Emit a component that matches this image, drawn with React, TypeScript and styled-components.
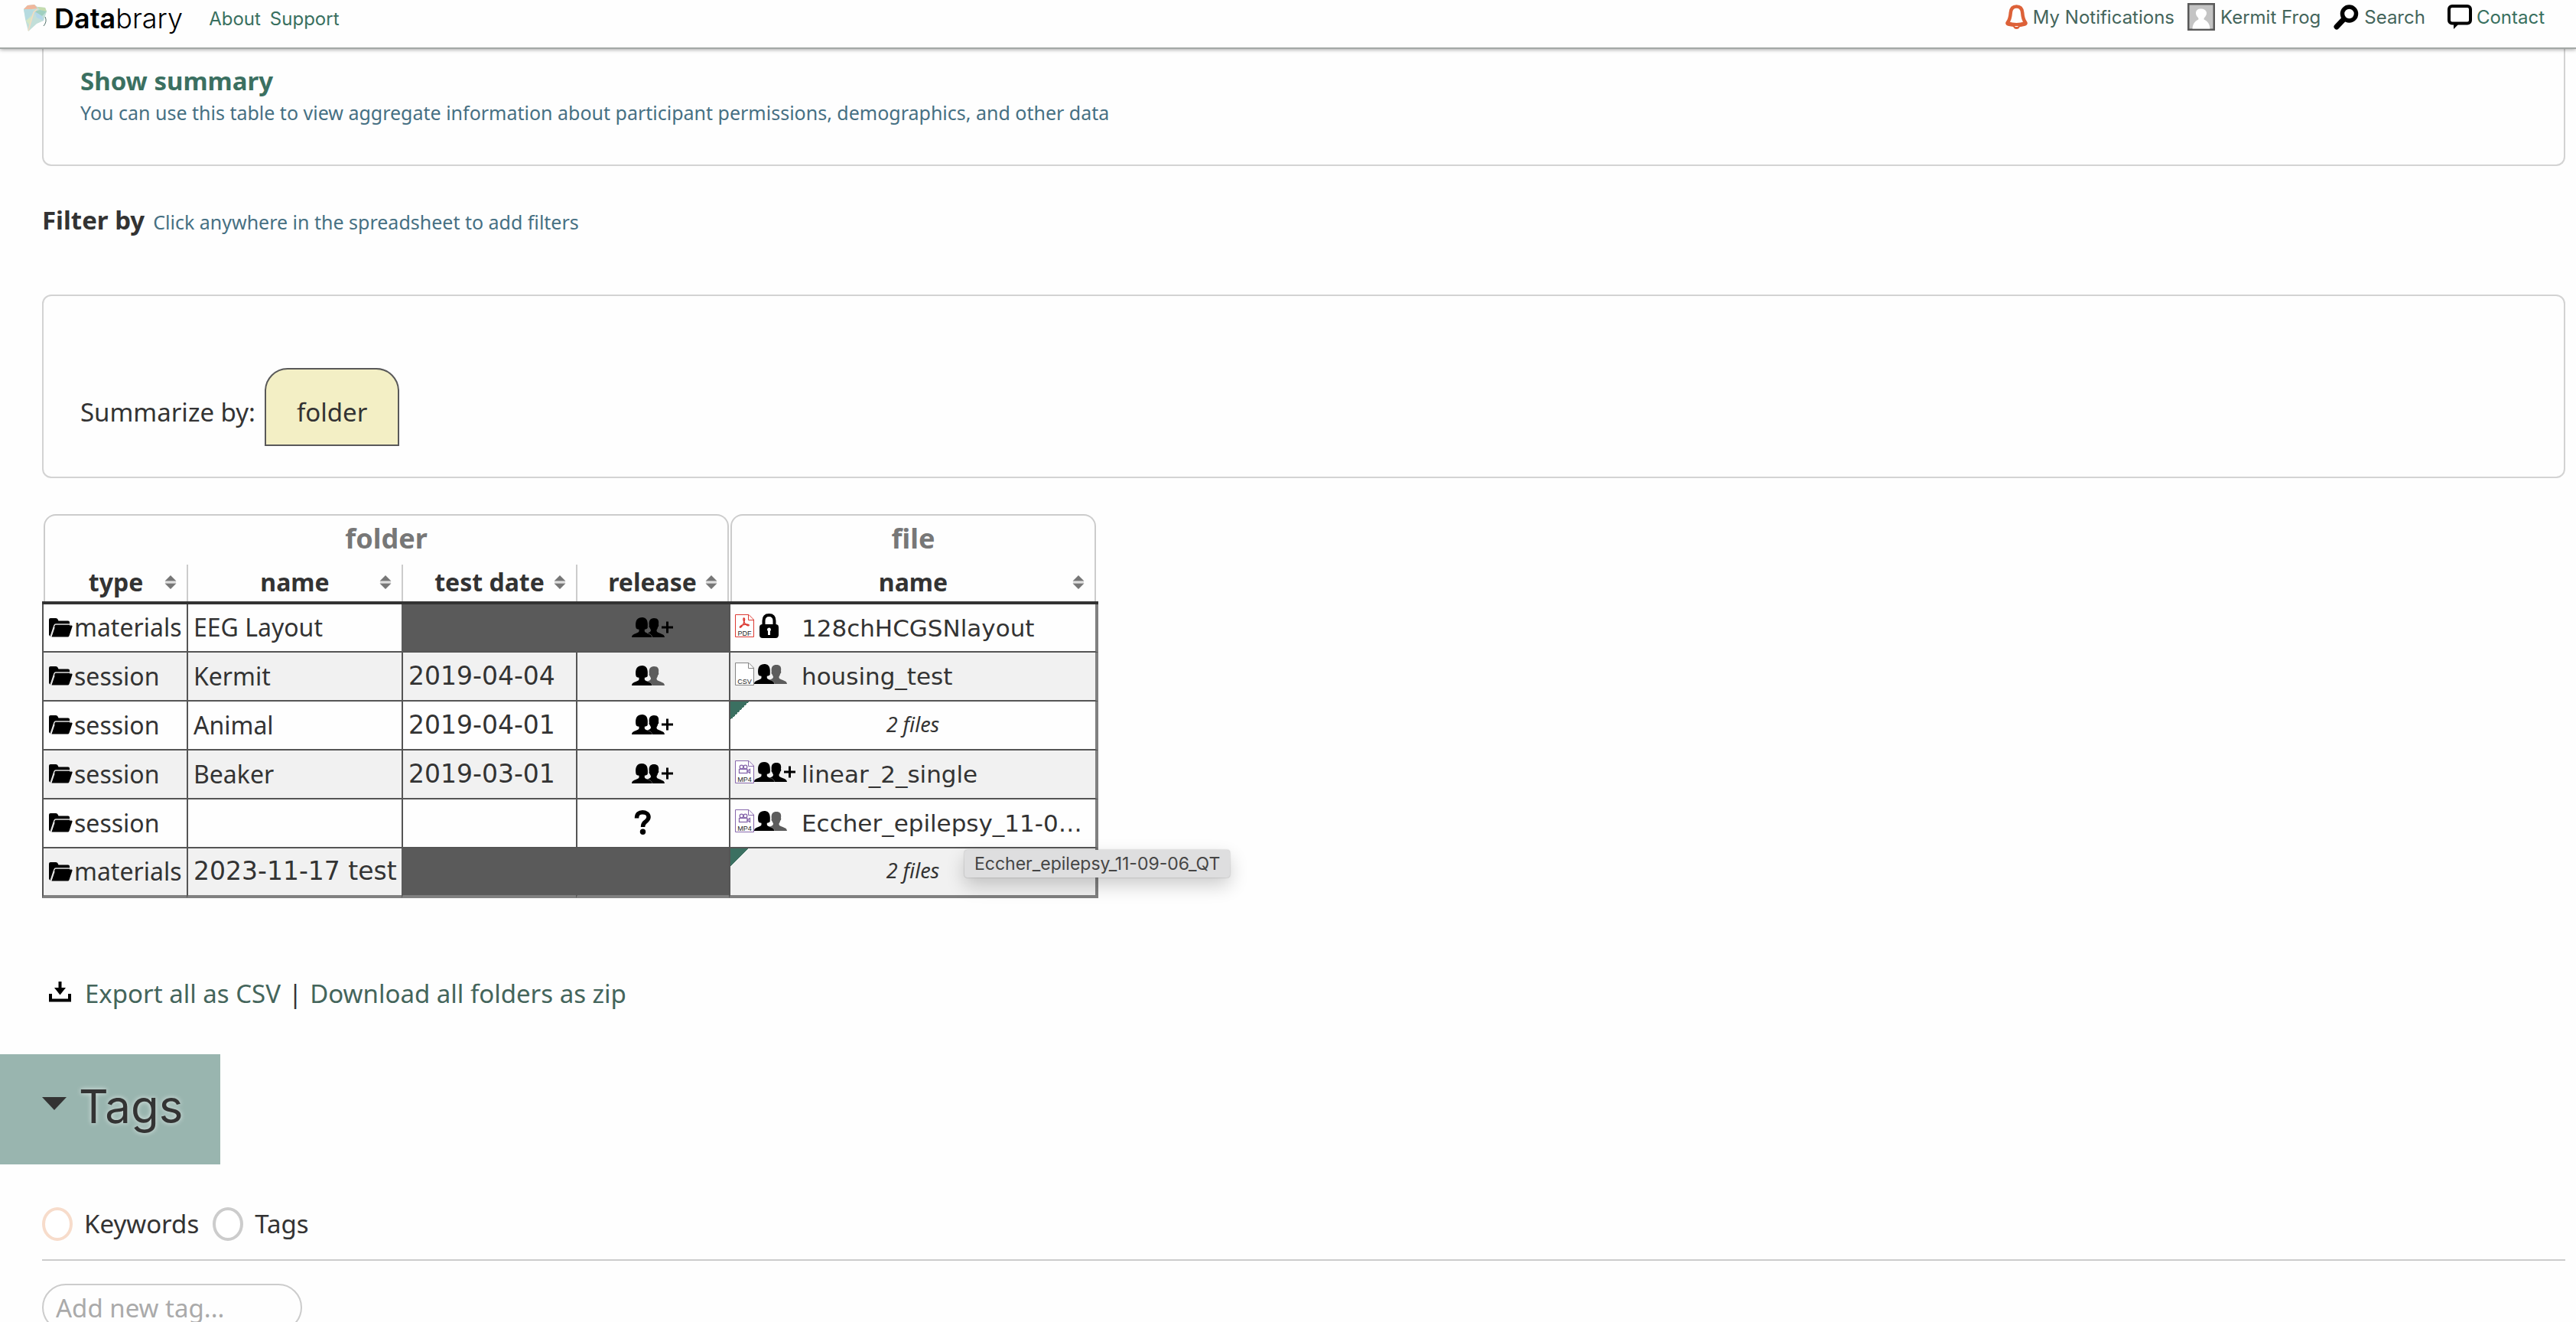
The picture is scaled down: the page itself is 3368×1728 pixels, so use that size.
import React from "react";
import styled, { createGlobalStyle } from "styled-components";

const GlobalStyle = createGlobalStyle`
  *, *::before, *::after { box-sizing: border-box; }
  html, body { margin: 0; padding: 0; background: #fefefe; }
  body { color: #333; font-family: "Noto Sans", "Open Sans", sans-serif; font-size: 33px; line-height: 44px; }
  button, input { font: inherit; color: inherit; }
`;

const wideDigits = `"DejaVu Sans", "Noto Sans", sans-serif`;
const displayFont = `Inter, "Liberation Sans", sans-serif`;

const Page = styled.div`
  height: 100vh;
  display: flex;
  flex-direction: column;
  overflow: hidden;
`;

const Header = styled.header`
  flex: none;
  position: relative;
  z-index: 2;
  display: flex;
  align-items: flex-start;
  justify-content: space-between;
  padding: 0 41px 14px 31px;
  background: #fefefe;
  border-bottom: 2px solid #a3a8a6;
  box-shadow: 0 1px 5px rgba(0, 0, 0, 0.35);
  font-family: ${displayFont};
  font-size: 24px;
  line-height: 46px;
`;

const NavGroup = styled.nav<{ $gap: number }>`
  display: flex;
  align-items: center;
  gap: ${(p) => p.$gap}px;
`;

const Brand = styled.a`
  display: flex;
  align-items: center;
  gap: 8px;
  margin-right: 22px;
  color: #000;
  font-size: 36px;
  font-weight: 300;
  text-decoration: none;
  b { font-weight: 600; }
`;

const NavLink = styled.a<{ $bright?: boolean }>`
  display: flex;
  align-items: center;
  gap: ${(p) => (p.$bright ? 6 : 7)}px;
  margin-left: ${(p) => (p.$bright ? 12 : 0)}px;
  color: ${(p) => (p.$bright ? "#39705f" : "#44655b")};
  text-decoration: none;
  svg { display: block; flex: none; margin-bottom: 2px; }
`;

const TopLink = styled.a`
  padding-top: 2px;
  color: #39705f;
  text-decoration: none;
`;

const Main = styled.main`
  flex: 1;
  min-height: 0;
  overflow: auto;
  scrollbar-width: none;
`;

const Section = styled.section`
  padding: 0 14px 0 55px;
`;

const SummaryPanel = styled.div`
  padding: 20px 48px 49px;
  border: 2px solid #d3d3d3;
  border-top: 0;
  border-radius: 0 0 12px 12px;
`;

const SummaryButton = styled.button`
  display: block;
  padding: 0;
  border: 0;
  background: none;
  color: #3b7061;
  font-weight: 700;
  cursor: pointer;
`;

const Hint = styled.span`
  color: #467083;
  font-size: 25px;
  line-height: 38px;
`;

const SummaryHint = styled(Hint)`
  display: block;
`;

const FilterRow = styled.div`
  display: flex;
  align-items: baseline;
  gap: 11px;
  margin: 49px 0 75px;
`;

const FilterTitle = styled.h2`
  margin: 0;
  font-size: 33px;
  line-height: 44px;
`;

const GroupPanel = styled.div`
  display: flex;
  align-items: baseline;
  gap: 12px;
  padding: 94px 48px 40px;
  border: 2px solid #d3d3d3;
  border-radius: 12px;
`;

const FolderTab = styled.button`
  padding: 36px 40px 22px;
  border: 2px solid #595959;
  border-radius: 30px 30px 0 0;
  background: #f3efc5;
  line-height: 40px;
  cursor: pointer;
`;

const Sheet = styled.table`
  table-layout: fixed;
  width: 1381px;
  margin-top: 47px;
  border-collapse: separate;
  border-spacing: 0;
  font-size: 32px;
`;

const Col = styled.col<{ $w: number }>`
  width: ${(p) => p.$w}px;
`;

const HeadCell = styled.th<{ $first?: boolean; $last?: boolean; $file?: boolean; $line?: boolean }>`
  padding: 0 ${(p) => (p.$last ? 3 : 0)}px 0 ${(p) => (p.$first || p.$file ? 2 : 0)}px;
  border-bottom: ${(p) => (p.$line ? "4px solid #333" : "0")};
`;

const GroupTitle = styled.div`
  height: 66px;
  padding-top: 8px;
  border: 2px solid #ccc;
  border-bottom: 0;
  border-radius: 16px 16px 0 0;
  color: #777;
  font-size: 36px;
  line-height: 44px;
`;

const SortButton = styled.button<{ $end?: boolean }>`
  display: grid;
  grid-template-columns: 1fr auto 1fr;
  align-items: center;
  width: 100%;
  height: 48px;
  padding: 0 13px 2px;
  border: 0 solid #ccc;
  border-left-width: 2px;
  border-right-width: ${(p) => (p.$end ? 2 : 0)}px;
  background: none;
  font-weight: 700;
  cursor: pointer;
  svg { grid-column: 3; justify-self: end; }
  span { grid-column: 2; }
`;

const Row = styled.tr`
  &:nth-child(even) { background: #f1f1f1; }
  &:first-child td { height: 63px; }
  &:last-child td { height: 65px; border-bottom: 4px solid #808080; }
`;

const Cell = styled.td<{ $numeric?: boolean; $dark?: boolean }>`
  height: 64px;
  padding: 0 0 1px 7px;
  border-left: 2px solid ${(p) => (p.$dark ? "#5a5a5a" : "#555")};
  border-bottom: 2px solid #555;
  background: ${(p) => (p.$dark ? "#5a5a5a" : "transparent")};
  font-family: ${(p) => (p.$numeric ? wideDigits : "inherit")};
  font-size: ${(p) => (p.$numeric ? 33 : 32)}px;
  white-space: nowrap;
`;

const TypeLabel = styled.div`
  display: flex;
  align-items: center;
  gap: 2px;
`;

const ReleaseMark = styled.div`
  display: flex;
  width: 56px;
  margin: 0 auto;
  svg { display: block; }
`;

const ReleaseCell = styled(Cell)`
  padding: 0 0 2px;
`;

const FileCell = styled(Cell)<{ $folded?: boolean }>`
  position: relative;
  padding: 0 0 0 ${(p) => (p.$folded ? 0 : 6)}px;
  border-right: 4px solid #808080;
  background-image: ${(p) => (p.$folded ? "linear-gradient(135deg, #3b7061 50%, transparent 50%)" : "none")};
  background-size: 24px 24px;
  background-repeat: no-repeat;
`;

const FileLine = styled.div`
  display: grid;
  grid-template-columns: 87px 1fr;
  align-items: center;
  font-family: ${wideDigits};
  font-size: 31px;
`;

const FileIcons = styled.span<{ $spaced?: boolean }>`
  display: flex;
  align-items: center;
  gap: ${(p) => (p.$spaced ? 7 : 0)}px;
  padding-bottom: 6px;
`;

const FileName = styled.span`
  overflow: hidden;
  text-overflow: ellipsis;
`;

const FileCount = styled.em`
  display: block;
  padding-bottom: 3px;
  text-align: center;
  font-size: 27px;
`;

const Tooltip = styled.span`
  position: absolute;
  z-index: 1;
  left: 306px;
  top: 66px;
  padding: 0 13px;
  border-radius: 4px;
  background: #dededf;
  box-shadow: 0 0 2px rgba(0, 0, 0, 0.3), 0 10px 24px rgba(0, 0, 0, 0.2);
  color: #454545;
  font-family: ${displayFont};
  font-size: 23px;
  line-height: 36px;
`;

const ExportRow = styled.div`
  display: flex;
  align-items: center;
  gap: 10px;
  margin: 103px 0 57px;
  padding-left: 9px;
  svg { margin: 0 8px 6px 0; }
`;

const ExportLink = styled.a`
  color: #44655b;
  text-decoration: none;
`;

const TagsToggle = styled.button`
  display: flex;
  align-items: center;
  gap: 16px;
  height: 144px;
  padding: 0 48px 8px 55px;
  border: 0;
  background: #99b5af;
  font-family: ${displayFont};
  font-size: 60px;
  line-height: 72px;
  text-shadow: 0 0 6px rgba(255, 255, 255, 0.7);
  cursor: pointer;
  svg { margin-bottom: 8px; }
`;

const Legend = styled.div`
  display: flex;
  gap: 18px;
  padding: 56px 0 24px;
  border-bottom: 2px solid #ccc;
`;

const Choice = styled.label`
  display: flex;
  align-items: center;
  gap: 15px;
`;

const Radio = styled.input<{ $ring: string }>`
  appearance: none;
  width: 40px;
  height: 44px;
  margin: 0;
  border: 4px solid ${(p) => p.$ring};
  border-radius: 50%;
  background: #fff;
`;

const TagInput = styled.input`
  display: block;
  width: 340px;
  height: 62px;
  margin-top: 30px;
  padding: 0 16px;
  border: 2px solid #ccc;
  border-radius: 31px;
  background: #fefefe;
  &::placeholder { color: #aaa; opacity: 1; }
`;

const Kite = () => (
  <svg width="32" height="36" viewBox="0 0 32 36" aria-hidden="true">
    <path d="M0 6 5 1 14 0 18 3 28 4 30 9 26 21 17 25 6 35 2 19Z" fill="#c2dfd9" />
    <path d="M0 6 5 1 14 0 18 5 10 6Z" fill="#f0b79c" />
    <path d="M18 3 28 4 30 9 21 7Z" fill="#c5dcae" />
    <path d="M0 6 10 6 14 9 3 21Z" fill="#b6dbe0" />
    <path d="M14 9 21 7 30 9 24 15Z" fill="#9fcfc0" />
    <path d="M14 9 24 15 26 21 17 17Z" fill="#b4d7ea" />
    <path d="M3 21 12 14 8 27Z" fill="#d6e7c4" />
    <path d="M18 6 13 10 6 34" fill="none" stroke="#f3dcc2" strokeWidth="1.5" />
    <path d="M28 16q3 6-2 12" fill="none" stroke="#56756d" strokeWidth="1" />
  </svg>
);

const Bell = () => (
  <svg width="29" height="32" viewBox="0 0 29 32" aria-hidden="true">
    <path
      d="M14.500 2.500c-5 0-7.300 3.200-7.700 8-.5 6.500-1.300 9.500-3.800 12.500-1 1.300-.6 2.200.6 2.500 6.500 1.700 15.300 1.700 21.800 0 1.200-.3 1.600-1.200.6-2.500-2.500-3-3.300-6-3.800-12.500-.4-4.800-2.700-8-7.700-8Z"
      fill="#fefefe" stroke="#dd6138" strokeWidth="4.500" strokeLinejoin="round"
    />
    <path d="M3 24q11.500 4 23 0" fill="none" stroke="#dd6138" strokeWidth="4" />
    <path d="M9.500 26.500h10q-1 5.500-5 5.500t-5-5.500Z" fill="#dd6138" />
    <path d="M12.500 28.500h4" stroke="#fefefe" strokeWidth="1" />
  </svg>
);

const Avatar = () => (
  <svg width="36" height="36" viewBox="0 0 36 36" aria-hidden="true">
    <rect x="1.250" y="1.250" width="33.500" height="33.500" fill="#c4c4c4" stroke="#595959" strokeWidth="2.500" />
    <path d="M6.500 33.500c.4-6 3-9.500 7-11.500 1.300-.7 1.300-1.700.3-3-2-2-2.800-4-2.800-6C11 9.500 13.500 7.500 17.500 7.500s7.500 2 7.500 5.500c0 2-.8 4-2.800 6-1 1.300-1 2.300.3 3 4 2 6.600 5.500 7 11.500Z" fill="#fff" />
  </svg>
);

const Magnifier = () => (
  <svg width="33" height="33" viewBox="0 0 33 33" aria-hidden="true">
    <circle cx="20.500" cy="12" r="9" fill="none" stroke="#000" strokeWidth="5.500" />
    <path d="M13.500 19 4 29" stroke="#000" strokeWidth="7" strokeLinecap="round" />
  </svg>
);

const Bubble = () => (
  <svg width="32" height="32" viewBox="0 0 32 32" aria-hidden="true">
    <rect x="2" y="2" width="28" height="22.500" rx="4" fill="none" stroke="#000" strokeWidth="4" />
    <path d="M8 25v7l7-7Z" fill="#000" />
  </svg>
);

const SortArrows = () => (
  <svg width="16" height="18" viewBox="0 0 16 18" aria-hidden="true">
    <path d="M8 0 15.500 7.500H.5ZM8 18 15.500 10.500H.5Z" fill="#777" />
    <path d="M1 9h14" stroke="#d5d5d5" strokeWidth="1.500" />
  </svg>
);

const FolderIcon = () => (
  <svg width="31" height="25" viewBox="0 0 31 25" aria-hidden="true">
    <path d="M0 22V2q0-2 2-2h7q2 0 2.500 1.500L12.500 3.500H25q2 0 2 2V12H6L2 24Z" fill="#000" />
    <path d="M2 24.500 7 9.500Q7.500 8 9 8h20" fill="none" stroke="#e0e0e0" strokeWidth="1.500" />
    <path d="M3.500 24.500 8 11q.5-1.500 2-1.500h19.500q1.500 0 1 1.500L26.500 23q-.5 1.500-2 1.500Z" fill="#000" />
  </svg>
);

const People = ({ shade = "#000", plus = false }: { shade?: string; plus?: boolean }) => (
  <svg width={plus ? 54 : 43} height="26" viewBox={plus ? "0 0 54 26" : "0 0 43 26"} aria-hidden="true">
    <path d="M17 26V22l6-2.500c1.300-.6 2-1.500 2-3l-1.500-3c-1-1-1.300-2-.7-3C22 4.500 24 1 29 1c5.500 0 6.800 3.500 6 8 .5 1.500.2 3-.8 3.500-.4 2-1 3-1.700 4 0 2 .5 2.600 2 3.300C39 22 42.500 22 43 26Z" fill={shade} />
    <path d="M0 26c.3-3 2-3.500 4-4.400 2.500-1.200 5-1.600 5.500-3.300v-2.500C7 15.500 5.500 14.500 5.500 13.500 4.500 9 4.500 0 13.200 0S21 9 20.800 13.500c-.5 1.500-2 2-4 2.300v2.500c.5 1.700 3 2.100 5.500 3.300 2 .9 3.700 1.400 4 4.400Z" fill="#000" />
    <path d="M20 20.500c3.500 1 6 2 6.800 5.500" fill="none" stroke="#888" strokeWidth=".6" />
    {plus && <path d="M39 13h15M46.500 5.500v15" stroke="#000" strokeWidth="3" />}
  </svg>
);

const Question = () => (
  <svg width="26" height="32" viewBox="0 0 26 32" aria-hidden="true">
    <path d="M6.500 10.500C6.500 5 9.500 2.800 14 2.800s8 2.200 8 6.200c0 3.200-2 4.500-4.200 6.300C15.500 17 14.500 18.500 14.500 22" fill="none" stroke="#000" strokeWidth="5.500" />
    <circle cx="14.500" cy="28.300" r="3.700" fill="#000" />
  </svg>
);

const Lock = () => (
  <svg width="25" height="32" viewBox="0 0 25 32" aria-hidden="true">
    <path d="M5.500 16V9.500C5.500 4.500 8 2 12.500 2s7 2.500 7 7.500V16" fill="none" stroke="#000" strokeWidth="4" />
    <rect y="14" width="25" height="18" rx="4" fill="#000" />
    <path d="M10 21.500a2.500 2.500 0 1 1 4 1.500V28h-3v-5Z" fill="#fff" />
  </svg>
);

const kinds = { PDF: "#dc3a33", CSV: "#858585", MP4: "#8767ac" };
type Kind = keyof typeof kinds;

const DocIcon = ({ kind }: { kind: Kind }) => (
  <svg width="25" height="30" viewBox="0 0 25 30" role="img" aria-label={kind}>
    <path d="M.5.5H18L24.500 7V29.500H.5Z" fill="#fff" stroke={kinds[kind]} />
    <path d="M17.500.5V7.500H24.500" fill="none" stroke={kinds[kind]} />
    {kind === "PDF" && (
      <path d="M11.500 5c2 0 .8 4-.5 7-1.500 3.200-3 5.300-4.300 5.200-1.500-.5 1-3 4.800-3.700 3.500-.8 6.800-.5 6.800.7-.2 1.500-3.300.2-5.300-2.200-1.800-2.500-2.800-7-1.500-7Z" fill="none" stroke={kinds.PDF} strokeWidth="1.400" />
    )}
    {kind === "MP4" && (
      <g fill="none" stroke={kinds.MP4} strokeWidth="1.300">
        <circle cx="8.500" cy="8.500" r="2.300" />
        <circle cx="13.500" cy="8.500" r="2.300" />
        <rect x="5.500" y="11.500" width="10.500" height="5" />
        <path d="M16 14 19.500 11.500v5Z" />
      </g>
    )}
    <text x="12.500" y="27.500" textAnchor="middle" fontFamily="Liberation Sans, sans-serif" fontSize="9" fill="#222">{kind}</text>
  </svg>
);

const DownloadIcon = () => (
  <svg width="29" height="27" viewBox="0 0 29 27" aria-hidden="true">
    <path d="M14.500 0v10" stroke="#000" strokeWidth="4" />
    <path d="M7 8h15l-7.500 9.500Z" fill="#000" />
    <path d="M2 16v8.500h25V16" fill="none" stroke="#000" strokeWidth="4" />
  </svg>
);

type Release = "shared" | "public" | "private" | "unknown" | null;

const ReleaseIcon = ({ value }: { value: Release }) => {
  if (value === "public") return <People plus />;
  if (value === "shared") return <People shade="#5c5c5c" />;
  if (value === "private") return <Lock />;
  if (value === "unknown") return <Question />;
  return null;
};

interface Entry {
  type: "materials" | "session";
  name: string;
  date?: string;
  release: Release;
  file?: { kind: Kind; release: Release; name: string; hovered?: boolean };
}

const entries: Entry[] = [
  { type: "materials", name: "EEG Layout", release: "public", file: { kind: "PDF", release: "private", name: "128chHCGSNlayout" } },
  { type: "session", name: "Kermit", date: "2019-04-04", release: "shared", file: { kind: "CSV", release: "shared", name: "housing_test" } },
  { type: "session", name: "Animal", date: "2019-04-01", release: "public" },
  { type: "session", name: "Beaker", date: "2019-03-01", release: "public", file: { kind: "MP4", release: "public", name: "linear_2_single" } },
  { type: "session", name: "", date: "", release: "unknown", file: { kind: "MP4", release: "shared", name: "Eccher_epilepsy_11-09-06_QT", hovered: true } },
  { type: "materials", name: "2023-11-17 test", release: null },
];

const columns = ["type", "name", "test date", "release", "name"];

const EntryRow = ({ entry }: { entry: Entry }) => {
  const dark = entry.type === "materials";
  const { file } = entry;
  return (
    <Row>
      <Cell><TypeLabel><FolderIcon />{entry.type}</TypeLabel></Cell>
      <Cell $numeric={/^\d/.test(entry.name)}>{entry.name}</Cell>
      <Cell $numeric $dark={dark}>{entry.date}</Cell>
      <ReleaseCell $dark={dark}><ReleaseMark><ReleaseIcon value={entry.release} /></ReleaseMark></ReleaseCell>
      <FileCell $folded={!file}>
        {file ? (
          <FileLine>
            <FileIcons $spaced={file.release === "private"}>
              <DocIcon kind={file.kind} />
              <ReleaseIcon value={file.release} />
            </FileIcons>
            <FileName>{file.name}</FileName>
          </FileLine>
        ) : (
          <FileCount>2 files</FileCount>
        )}
        {file?.hovered && <Tooltip role="tooltip">{file.name}</Tooltip>}
      </FileCell>
    </Row>
  );
};

export default function App() {
  return (
    <Page>
      <GlobalStyle />
      <Header>
        <NavGroup $gap={12}>
          <Brand href="#home"><Kite /><span><b>Data</b>brary</span></Brand>
          <TopLink href="#about">About</TopLink>
          <TopLink href="#support">Support</TopLink>
        </NavGroup>
        <NavGroup $gap={17}>
          <NavLink href="#notifications"><Bell />My Notifications</NavLink>
          <NavLink href="#profile"><Avatar />Kermit Frog</NavLink>
          <NavLink href="#search"><Magnifier />Search</NavLink>
          <NavLink href="#contact" $bright><Bubble />Contact</NavLink>
        </NavGroup>
      </Header>
      <Main>
        <Section>
          <SummaryPanel>
            <SummaryButton type="button">Show summary</SummaryButton>
            <SummaryHint>You can use this table to view aggregate information about participant permissions, demographics, and other data</SummaryHint>
          </SummaryPanel>
          <FilterRow>
            <FilterTitle>Filter by</FilterTitle>
            <Hint>Click anywhere in the spreadsheet to add filters</Hint>
          </FilterRow>
          <GroupPanel>
            <span>Summarize by:</span>
            <FolderTab type="button">folder</FolderTab>
          </GroupPanel>
          <Sheet>
            <colgroup>
              <Col $w={189} /><Col $w={281} /><Col $w={228} /><Col $w={200} /><Col $w={483} />
            </colgroup>
            <thead>
              <tr>
                <HeadCell colSpan={4} $first><GroupTitle>folder</GroupTitle></HeadCell>
                <HeadCell $file $last><GroupTitle>file</GroupTitle></HeadCell>
              </tr>
              <tr>
                {columns.map((label, i) => (
                  <HeadCell key={i} $line $first={i === 0} $file={i === 4} $last={i === 4}>
                    <SortButton type="button" $end={i >= 3}><span>{label}</span><SortArrows /></SortButton>
                  </HeadCell>
                ))}
              </tr>
            </thead>
            <tbody>
              {entries.map((entry, i) => <EntryRow key={i} entry={entry} />)}
            </tbody>
          </Sheet>
          <ExportRow>
            <DownloadIcon />
            <ExportLink href="#csv">Export all as CSV</ExportLink>
            <span>|</span>
            <ExportLink href="#zip">Download all folders as zip</ExportLink>
          </ExportRow>
        </Section>
        <TagsToggle type="button" aria-expanded="true">
          <svg width="32" height="17" viewBox="0 0 32 17" aria-hidden="true"><path d="M0 0h32L16 17Z" fill="#333" /></svg>
          Tags
        </TagsToggle>
        <Section>
          <Legend>
            <Choice><Radio type="radio" name="kind" $ring="#f7dccb" />Keywords</Choice>
            <Choice><Radio type="radio" name="kind" $ring="#cccccc" />Tags</Choice>
          </Legend>
          <TagInput type="text" placeholder="Add new tag..." aria-label="Add new tag" />
        </Section>
      </Main>
    </Page>
  );
}
